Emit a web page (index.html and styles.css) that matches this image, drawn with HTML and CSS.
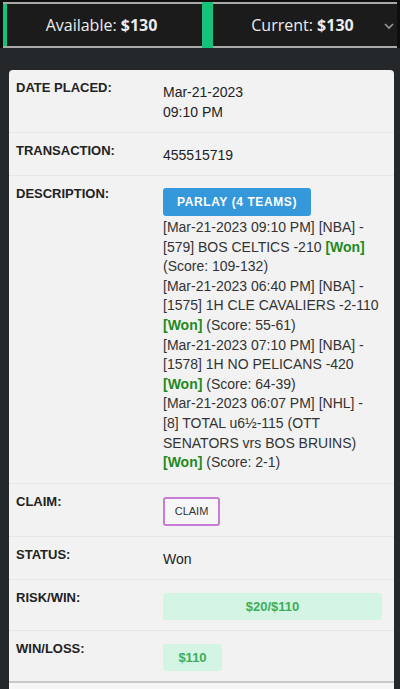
FILE: index.html
```html
<!DOCTYPE html>
<html>
<head>
<meta charset="utf-8">
<link rel="stylesheet" href="styles.css">
</head>
<body>
<div class="topbar">
  <div class="bar">
    <div class="panel panel-left"><span class="panel-text">Available: <b>$130</b></span></div>
    <div class="divider"></div>
    <div class="panel panel-right">
      <span class="panel-text">Current: <b>$130</b></span>
      <svg class="chev" width="10" height="6" viewBox="0 0 10 6"><path d="M1 1 L5 5 L9 1" fill="none" stroke="#9a9a9a" stroke-width="1.6"/></svg>
    </div>
  </div>
</div>
<div class="page">
  <div class="card">
    <div class="row">
      <div class="label">DATE PLACED:</div>
      <div class="value">Mar-21-2023<br>09:10 PM</div>
    </div>
    <div class="row">
      <div class="label">TRANSACTION:</div>
      <div class="value">455515719</div>
    </div>
    <div class="row">
      <div class="label">DESCRIPTION:</div>
      <div class="value">
        <div class="parlay">PARLAY (4 TEAMS)</div>
        <div class="desc">
          <div>[Mar-21-2023 09:10 PM] [NBA] - [579] BOS CELTICS -210 <span class="won">[Won]</span> (Score: 109-132)</div>
          <div>[Mar-21-2023 06:40 PM] [NBA] - [1575] 1H CLE CAVALIERS -2-110 <span class="won">[Won]</span> (Score: 55-61)</div>
          <div>[Mar-21-2023 07:10 PM] [NBA] - [1578] 1H NO PELICANS -420 <span class="won">[Won]</span> (Score: 64-39)</div>
          <div>[Mar-21-2023 06:07 PM] [NHL] - [8] TOTAL u6½-115 (OTT SENATORS vrs BOS BRUINS) <span class="won">[Won]</span> (Score: 2-1)</div>
        </div>
      </div>
    </div>
    <div class="row">
      <div class="label">CLAIM:</div>
      <div class="value"><div class="claim">CLAIM</div></div>
    </div>
    <div class="row">
      <div class="label">STATUS:</div>
      <div class="value">Won</div>
    </div>
    <div class="row">
      <div class="label">RISK/WIN:</div>
      <div class="value"><div class="money money-wide">$20/$110</div></div>
    </div>
    <div class="row">
      <div class="label">WIN/LOSS:</div>
      <div class="value"><div class="money money-small">$110</div></div>
    </div>
  </div>
  <div class="after"></div>
</div>
</body>
</html>
```

FILE: styles.css
```css
html, body {
  margin: 0;
  padding: 0;
}
body {
  background: #24282b;
  font-family: "Liberation Sans", Arial, sans-serif;
  width: 400px;
  height: 689px;
  overflow: hidden;
}
.topbar {
  background: #0e0e0e;
  padding-top: 2px;
  padding-left: 3px;
  padding-right: 3px;
}
.bar {
  display: flex;
  height: 42px;
  background: #1b1b1b;
  border-top: 2px solid #a9a9a9;
  border-bottom: 2px solid #a9a9a9;
  font-family: "Open Sans", sans-serif;
  font-size: 16px;
  color: #ececec;
}
.panel {
  display: flex;
  align-items: center;
  justify-content: center;
}
.panel b {
  font-weight: 700;
}
.panel-left {
  border-left: 4px solid #14c27a;
  box-sizing: border-box;
  width: 199px;
}
.divider {
  width: 11px;
  background: #14c27a;
  margin-top: -2px;
  margin-bottom: -2px;
}
.panel-right {
  flex: 1;
}
.panel-text {
  flex: 1;
  text-align: center;
}
.panel-left .panel-text {
  padding-right: 6px;
}
.panel-right .panel-text {
  padding-left: 8px;
}
.chev {
  margin-right: 3px;
  margin-top: 1px;
}
.page {
  padding: 22px 6px 0 9px;
}
.card {
  background: #f2f2f2;
  border-radius: 4px 4px 0 0;
  border-bottom: 2px solid #c9c9c9;
}
.row {
  display: flex;
  padding: 8px 12px 10px 7px;
  border-top: 1px solid #e7e7e7;
}
.row:first-child {
  border-top: none;
}
.label {
  width: 147px;
  flex: none;
  font-size: 13px;
  font-weight: 700;
  line-height: 20px;
  color: #222;
}
.value {
  flex: 1;
  margin-top: 4px;
  font-size: 14px;
  line-height: 20px;
  color: #222;
}
.parlay {
  display: block;
  background: #3498db;
  color: #fff;
  font-weight: 700;
  font-size: 12px;
  letter-spacing: 0.6px;
  width: 148px;
  height: 28px;
  line-height: 28px;
  text-align: center;
  border-radius: 3px;
}
.desc {
  margin-top: 2px;
  line-height: 19.6px;
  color: #333;
}
.won {
  color: #1e8a1e;
  font-weight: 700;
}
.claim {
  width: 53px;
  height: 25px;
  border: 2px solid #c77cd8;
  border-radius: 3px;
  background: #f6f6f6;
  font-size: 11px;
  color: #333;
  text-align: center;
  line-height: 25px;
  margin-top: 1px;
}
.money {
  background: #d4f5e3;
  color: #3cae5a;
  font-weight: 700;
  font-size: 13px;
  height: 27px;
  line-height: 27px;
  text-align: center;
  border-radius: 3px;
  margin-top: 1px;
}
.money-small {
  width: 59px;
}
.after {
  height: 12px;
  background: #f6f6f6;
}
```
